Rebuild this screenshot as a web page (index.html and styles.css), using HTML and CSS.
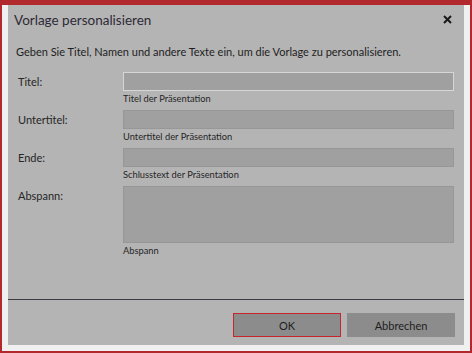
FILE: index.html
```html
<!DOCTYPE html>
<html>
<head>
<meta charset="utf-8">
<link rel="stylesheet" href="styles.css">
</head>
<body>
<div class="window">
  <div class="dialog">
    <div class="header">
      <div class="title">Vorlage personalisieren</div>
      <div class="close">
        <svg width="9" height="9" viewBox="0 0 9 9"><path d="M1 1 L8 8 M8 1 L1 8" stroke="#1a1a1a" stroke-width="2" fill="none"/></svg>
      </div>
    </div>
    <div class="desc">Geben Sie Titel, Namen und andere Texte ein, um die Vorlage zu personalisieren.</div>
    <div class="form">
      <div class="label">Titel:</div>
      <div class="field">
        <div class="input focused"></div>
        <div class="hint">Titel der Präsentation</div>
      </div>
      <div class="label">Untertitel:</div>
      <div class="field">
        <div class="input"></div>
        <div class="hint">Untertitel der Präsentation</div>
      </div>
      <div class="label">Ende:</div>
      <div class="field">
        <div class="input"></div>
        <div class="hint">Schlusstext der Präsentation</div>
      </div>
      <div class="label">Abspann:</div>
      <div class="field">
        <div class="input area"></div>
        <div class="hint">Abspann</div>
      </div>
    </div>
    <div class="separator"></div>
    <div class="buttons">
      <div class="btn ok">OK</div>
      <div class="btn">Abbrechen</div>
    </div>
  </div>
</div>
</body>
</html>
```
FILE: styles.css
```css
html, body {
  margin: 0;
  padding: 0;
}
body {
  width: 472px;
  height: 353px;
  overflow: hidden;
  font-family: Lato, "Noto Sans", sans-serif;
  color: #262626;
}
.window {
  box-sizing: border-box;
  width: 472px;
  height: 353px;
  background: #f0f0f0;
  border-top: 5px solid #b1282d;
  border-left: 2px solid #b1282d;
  border-right: 2px solid #b1282d;
  border-bottom: 2px solid #b1282d;
  padding: 0 6px 6px 6px;
}
.dialog {
  height: 340px;
  background: #b4b4b4;
  display: flex;
  flex-direction: column;
}
.header {
  height: 32px;
  display: flex;
  align-items: center;
  justify-content: space-between;
  padding: 0 12px 0 6px;
}
.title {
  font-size: 13.5px;
  color: #2e2a36;
  margin-top: -2px;
}
.close {
  display: flex;
  margin-top: -3px;
}
.desc {
  font-size: 11px;
  line-height: 16px;
  padding-left: 8px;
  margin-top: 7px;
  color: #1e1e1e;
}
.form {
  display: grid;
  grid-template-columns: 105px 331px;
  row-gap: 0;
  padding-left: 10px;
  margin-top: 12px;
}
.label {
  font-size: 11px;
  line-height: 16px;
  padding-top: 2px;
  color: #262626;
}
.field {
  height: 38px;
  display: flex;
  flex-direction: column;
}
.field:last-child {
  height: auto;
}
.input {
  box-sizing: border-box;
  height: 19px;
  background: #a0a0a0;
  border: 1px solid #979797;
}
.input.focused {
  border-color: #d6d6d6;
}
.input.area {
  height: 57px;
}
.hint {
  font-size: 9.3px;
  line-height: 14px;
  margin-top: 1px;
  color: #262626;
}
.separator {
  margin-top: 41px;
  height: 1px;
  background: #3d3c44;
}
.buttons {
  display: flex;
  justify-content: flex-end;
  gap: 6px;
  padding: 13px 9px 0 0;
}
.btn {
  box-sizing: border-box;
  width: 108px;
  height: 24px;
  background: #8c8c8c;
  display: flex;
  align-items: center;
  justify-content: center;
  font-size: 11px;
  color: #1e1e1e;
}
.btn.ok {
  border: 1px solid #c8242b;
}
```
